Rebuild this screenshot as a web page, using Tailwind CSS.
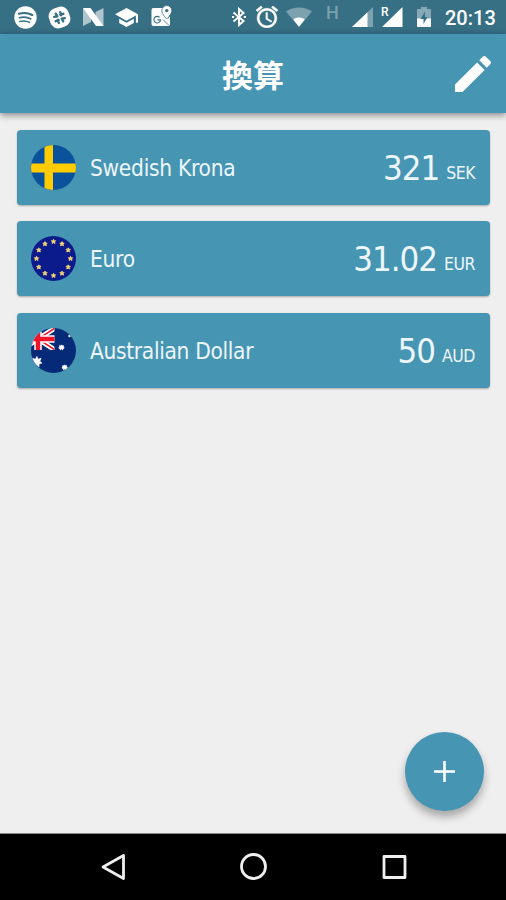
<!DOCTYPE html>
<html lang="ja">
<head>
    <meta charset="UTF-8">
    <meta name="viewport" content="width=device-width, initial-scale=1.0">
    <title>換算</title>
    <script src="https://cdn.jsdelivr.net/npm/@tailwindcss/browser@4"></script>
</head>
<body class="bg-[#efefef] font-['DejaVu_Sans_Condensed','DejaVu_Sans','Noto_Sans_CJK_JP',sans-serif]">
    <div class="relative h-[900px] w-[506px] flex flex-col overflow-hidden">
        <!-- Status bar -->
        <div class="h-[34px] shrink-0 bg-[#376f84] flex items-center justify-between pl-3.5 pr-[12px] text-white">
            <div class="flex items-center gap-[11px]">
                <svg class="w-[23px] h-[23px]" viewBox="0 0 23 23" fill="none" stroke="#376f84" stroke-linecap="round">
                    <circle cx="11.5" cy="11.5" r="11.2" fill="#fff" stroke="none"/>
                    <path d="M5 7.8c4.5-1.2 9.5-.8 13.2 1.2" stroke-width="2.1"/>
                    <path d="M5.4 11.8c4-1 8.2-.6 11.4 1.1" stroke-width="1.7"/>
                    <path d="M5.8 15.4c3.500-.8 7-.5 9.700 1" stroke-width="1.4"/>
                </svg>
                <svg class="w-[23px] h-[23px]" viewBox="0 0 23 23" fill="none">
                    <g transform="rotate(-18 11.5 11.5)">
                        <rect x="1.2" y="1.2" width="20.6" height="20.6" rx="8" fill="#fff"/>
                        <path d="M9.200 6.700v9.600M13.800 6.700v9.600M6.700 9.200h9.600M6.700 13.800h9.600" stroke="#376f84" stroke-width="2.400" stroke-linecap="round"/>
                        <path d="M11.500 6v11M6 11.500h11" stroke="#fff" stroke-width="1.300"/>
                    </g>
                </svg>
                <svg class="w-[22px] h-[18px]" viewBox="0 0 22 18" fill="#fff">
                    <path d="M1 0v18l8-4V5z" opacity=".6"/>
                    <path d="M21.500 0v18l-8-5V4z" opacity=".6"/>
                    <path d="M1 0h7.500l13 18H14z"/>
                </svg>
                <svg class="w-[23px] h-[19px]" viewBox="1 3 22 18" fill="#fff">
                    <path d="M5 13.180v4L12 21l7-3.820v-4L12 17l-7-3.820zM12 3L1 9l11 6 9-4.910V17h2V9L12 3z"/>
                </svg>
                <svg class="w-[22px] h-[22px] ml-0.5 -mt-0.5" viewBox="0 0 22 22">
                    <path d="M2.500 3H12c0 5 3 7.500 5 10.500l2-2.500v8c0 1.200-.8 2-2 2H2.500c-1.200 0-2-.8-2-2V5c0-1.200.8-2 2-2z" fill="#fff"/>
                    <path d="M15.800.6a5 5 0 0 0-5 5c0 3.600 5 8.400 5 8.400s5-4.800 5-8.400a5 5 0 0 0-5-5z" fill="#fff" stroke="#376f84" stroke-width=".8"/>
                    <circle cx="15.800" cy="5.600" r="1.700" fill="#376f84"/>
                    <path d="M8.600 12.400a3.300 3.300 0 1 0 .9 2.500H6.400" fill="none" stroke="#376f84" stroke-width="1.100"/>
                    <path d="M12 14.500l5.500 5.500" stroke="#376f84" stroke-width=".8"/>
                </svg>
            </div>
            <div class="flex items-center">
                <svg class="w-[14px] h-[20px] mr-2.5" viewBox="0 0 14 20" fill="none" stroke="#fff" stroke-width="2">
                    <path d="M1.500 5.500l10 8.500L7 18V2l4.500 4-10 8.500"/>
                    <path d="M0 10h2.200M11.800 10H14"/>
                </svg>
                <svg class="w-[22px] h-[22px] mr-2" viewBox="2 2 20 20" fill="#fff" stroke="#fff" stroke-width=".4">
                    <path d="M22 5.720l-4.600-3.860-1.290 1.530 4.600 3.860L22 5.720zM7.880 3.390L6.600 1.860 2 5.710l1.290 1.530 4.590-3.850zM12.500 8H11v6l4.750 2.850.75-1.230-4-2.370V8zM12 4c-4.970 0-9 4.030-9 9s4.020 9 9 9a9 9 0 0 0 0-18zm0 16c-3.870 0-7-3.130-7-7s3.130-7 7-7 7 3.130 7 7-3.130 7-7 7z"/>
                </svg>
                <svg class="w-[26px] h-[20px] mr-3.5" viewBox="0 0 26 20" fill="#fff">
                    <path d="M0 4.500C7.500-1 18.500-1 26 4.500L13 20z" opacity=".35"/>
                    <path d="M7.300 12.500c3.500-2.600 7.900-2.600 11.400 0L13 19.800z"/>
                </svg>
                <span class="w-[14px] mr-3 -mt-2 text-[18px] leading-[18px] font-medium text-white/35 font-[Roboto,sans-serif]">H</span>
                <svg class="w-[21px] h-[20px] mr-2" viewBox="0 0 21 20" fill="#fff">
                    <path d="M0 20L21 0v20z" opacity=".35"/>
                    <path d="M0 20L15.500 5.200V20z"/>
                </svg>
                <div class="relative w-[22px] h-[20px] mr-3.5">
                    <svg class="w-[22px] h-[20px]" viewBox="0 0 22 20" fill="#fff">
                        <path d="M1 20L21.500 0v20z"/>
                    </svg>
                    <span class="absolute left-0 -top-px text-[12px] leading-[12px] font-medium font-[Roboto,sans-serif]">R</span>
                </div>
                <svg class="w-[14px] h-[20px] mr-3.5" viewBox="0 0 14 20" fill="#fff">
                    <path d="M4 0h6v2h3c.6 0 1 .4 1 1v9H0V3c0-.6.4-1 1-1h3z" opacity=".4"/>
                    <path d="M0 11.500h14V19c0 .6-.4 1-1 1H1c-.6 0-1-.4-1-1z"/>
                    <path d="M8 4.500L3.500 12H6.500v5L10.500 10H8z" fill="#376f84"/>
                </svg>
                <span class="text-[20px] leading-[34px] pt-0.5 w-[49px] whitespace-nowrap font-medium font-[Roboto,sans-serif]">20:13</span>
            </div>
        </div>

        <!-- Toolbar -->
        <header class="relative h-[79px] shrink-0 bg-[#4695b3] flex items-center justify-center text-white shadow-[0_2px_7px_rgba(0,0,0,0.45)]">
            <h1 class="text-[31px] leading-[40px] font-bold pt-1.5 font-['Liberation_Sans','Noto_Sans_CJK_JP',sans-serif]">換算</h1>
            <button class="absolute right-[9px] top-4">
                <svg class="w-12 h-12" viewBox="0 0 24 24" fill="currentColor">
                    <path d="M3 17.250V21h3.750L17.810 9.940l-3.750-3.750L3 17.250zM20.710 7.040a1 1 0 0 0 0-1.410l-2.340-2.340a1 1 0 0 0-1.410 0l-1.830 1.830 3.750 3.750 1.830-1.830z"/>
                </svg>
            </button>
        </header>

        <!-- Currencies -->
        <main class="flex-1 pr-4 pl-[17px] pt-[17px] flex flex-col gap-[16.3px] text-[#edf6fb]">
            <div class="h-[75px] rounded-[4px] bg-[#4695b3] shadow-[0_1px_2px_rgba(0,0,0,0.3)] flex items-center pl-3.5 pr-[15px]">
                <svg class="w-[45px] h-[45px] mr-3.5 shrink-0" viewBox="0 0 45 45">
                    <clipPath id="flag"><circle cx="22.5" cy="22.5" r="22.5"/></clipPath>
                    <g clip-path="url(#flag)">
                        <path fill="#0a529c" d="M0 0h45v45H0z"/>
                        <path fill="#fecc00" d="M13.500 0h8.500v45h-8.500zM0 18.500h45v9H0z"/>
                    </g>
                </svg>
                <span class="pt-[3px] text-[22.5px] tracking-[-0.27px] whitespace-nowrap">Swedish Krona</span>
                <div class="ml-auto pt-px flex items-baseline">
                    <span class="text-[34.5px] tracking-[-1px] leading-[40px]">321</span>
                    <span class="ml-[7px] text-[17.5px] tracking-[-0.5px] relative -top-px">SEK</span>
                </div>
            </div>

            <div class="h-[75px] rounded-[4px] bg-[#4695b3] shadow-[0_1px_2px_rgba(0,0,0,0.3)] flex items-center pl-3.5 pr-[15px]">
                <svg class="w-[45px] h-[45px] mr-3.5 shrink-0" viewBox="0 0 45 45" fill="#f4d37a">
                    <circle cx="22.5" cy="22.5" r="22.5" fill="#0b1b8b"/>
                    <defs>
                        <path id="star" d="M0-2.200L.75-.8 2.200-.8 1.200.4 1.500 2 0 1.200-1.500 2-1.200.4-2.200-.8-.75-.8z" stroke="#f4d37a" stroke-width=".8"/>
                    </defs>
                    <use href="#star" x="22.5" y="5.5"/>
                    <use href="#star" x="31" y="7.8"/>
                    <use href="#star" x="37.2" y="14"/>
                    <use href="#star" x="39.5" y="22.5"/>
                    <use href="#star" x="37.2" y="31"/>
                    <use href="#star" x="31" y="37.2"/>
                    <use href="#star" x="22.5" y="39.5"/>
                    <use href="#star" x="14" y="37.2"/>
                    <use href="#star" x="7.8" y="31"/>
                    <use href="#star" x="5.5" y="22.5"/>
                    <use href="#star" x="7.8" y="14"/>
                    <use href="#star" x="14" y="7.8"/>
                </svg>
                <span class="pt-[3px] text-[22.5px] tracking-[-0.27px] whitespace-nowrap">Euro</span>
                <div class="ml-auto pt-px flex items-baseline">
                    <span class="text-[34.5px] tracking-[-1px] leading-[40px]">31.02</span>
                    <span class="ml-[7px] text-[17.5px] tracking-[-0.5px] relative -top-px">EUR</span>
                </div>
            </div>

            <div class="h-[75px] rounded-[4px] bg-[#4695b3] shadow-[0_1px_2px_rgba(0,0,0,0.3)] flex items-center pl-3.5 pr-[15px]">
                <svg class="w-[45px] h-[45px] mr-3.5 shrink-0" viewBox="0 0 45 45">
                    <g clip-path="url(#flag)">
                        <path fill="#052b78" d="M0 0h45v45H0z"/>
                        <clipPath id="canton"><path d="M0 0h23.500v22H0z"/></clipPath>
                        <g clip-path="url(#canton)">
                            <path d="M-10 0l34 22M24 0L-10 22" stroke="#fff" stroke-width="5"/>
                            <path d="M-10 0l34 22M24 0L-10 22" stroke="#f0142a" stroke-width="1.500"/>
                            <path d="M7 0v22M0 11h24" stroke="#fff" stroke-width="7.500"/>
                            <path d="M7 0v22M0 11h24" stroke="#f0142a" stroke-width="4.500"/>
                        </g>
                        <g fill="#fff" stroke="#fff" stroke-linejoin="round">
                            <path d="M5.800 28.500l1.300 2.800 3-.9-1.400 2.700 2.200 2-3 .6.200 3-2.300-2-2.300 2 .2-3-3-.6 2.200-2-1.400-2.700 3 .9z" stroke-width=".8"/>
                            <path d="M30.500 16.800l.8 1.100 1.300-.2-.3 1.300 1 1-1.300.5-.3 1.300-1.200-.8-1.200.8-.3-1.300-1.300-.5 1-1-.3-1.300 1.300.2z" stroke-width=".8"/>
                            <path d="M33.700 36.800l.8 1.100 1.300-.2-.3 1.300 1 1-1.300.5-.3 1.300-1.200-.8-1.200.8-.3-1.300-1.300-.5 1-1-.3-1.300 1.300.2z" stroke-width=".8"/>
                            <circle cx="38.5" cy="8" r="1" stroke-width=".4"/>
                        </g>
                    </g>
                </svg>
                <span class="pt-[3px] text-[22.5px] tracking-[-0.33px] whitespace-nowrap">Australian Dollar</span>
                <div class="ml-auto pt-px flex items-baseline">
                    <span class="text-[34.5px] tracking-[-1px] leading-[40px]">50</span>
                    <span class="ml-[7px] text-[17.5px] tracking-[-0.5px] relative -top-px">AUD</span>
                </div>
            </div>
        </main>

        <!-- Add button -->
        <button class="absolute left-[405px] top-[732px] w-[79px] h-[79px] rounded-full bg-[#4695b3] flex items-center justify-center shadow-[0_6px_9px_rgba(0,0,0,0.3)]">
            <svg class="w-[21px] h-[21px]" viewBox="0 0 21 21" stroke="#fff" stroke-width="2.6">
                <path d="M10.500 0v21M0 10.500h21"/>
            </svg>
        </button>

        <!-- Navigation bar -->
        <nav class="h-[67px] shrink-0 bg-black border-t border-[#8a8a8a] flex items-center justify-between pl-[100px] pr-[99px]">
            <svg class="w-[27px] h-[28px]" viewBox="0 0 27 28" fill="none" stroke="#efefef" stroke-width="2.8" stroke-linejoin="round">
                <path d="M3 14L23.500 2.500v23z"/>
            </svg>
            <svg class="w-[28px] h-[28px]" viewBox="0 0 28 28" fill="none" stroke="#efefef" stroke-width="2.8">
                <circle cx="13.5" cy="13.5" r="12"/>
            </svg>
            <svg class="w-[26px] h-[26px]" viewBox="0 0 26 26" fill="none" stroke="#efefef" stroke-width="2.8" stroke-linejoin="round">
                <path d="M3 2.500h21v21H3z"/>
            </svg>
        </nav>
    </div>
</body>
</html>
